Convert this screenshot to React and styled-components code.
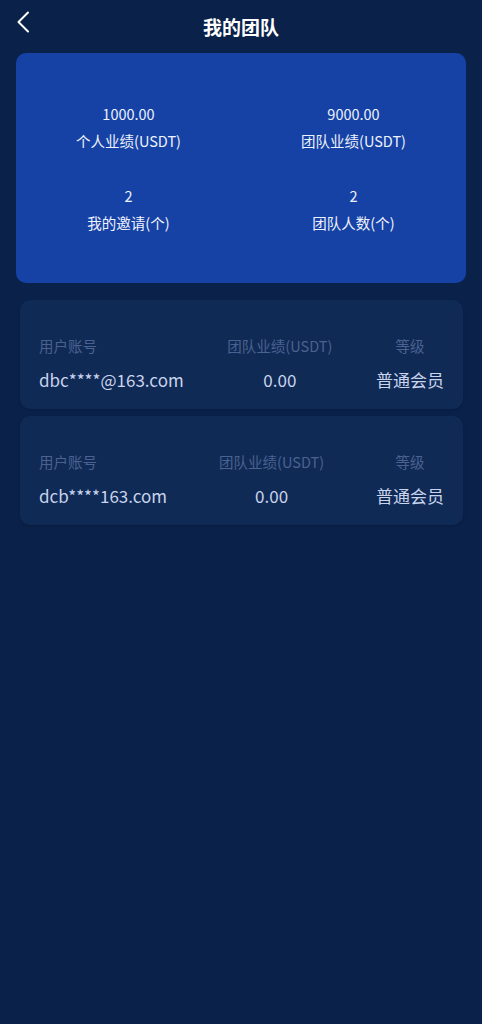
import styled, { createGlobalStyle } from 'styled-components'

const GlobalStyle = createGlobalStyle`
  html, body {
    margin: 0;
    padding: 0;
    background: #0a2149;
  }
  body {
    font-family: "Noto Sans CJK SC", "Noto Sans", sans-serif;
  }
`

const stats = [
  { value: '1000.00', label: '个人业绩(USDT)' },
  { value: '9000.00', label: '团队业绩(USDT)' },
  { value: '2', label: '我的邀请(个)' },
  { value: '2', label: '团队人数(个)' },
]

const members = [
  { account: 'dbc****@163.com', amount: '0.00', level: '普通会员' },
  { account: 'dcb****163.com', amount: '0.00', level: '普通会员' },
]

export default function App() {
  return (
    <Page>
      <GlobalStyle />
      <Header>
        <Back aria-label="返回">
          <svg width="14" height="22" viewBox="0 0 14 22" fill="none">
            <path d="M12 1.5L2.5 11L12 20.5" stroke="#ffffff" strokeWidth="2" strokeLinecap="round" strokeLinejoin="round" />
          </svg>
        </Back>
        <Title>我的团队</Title>
      </Header>

      <SummaryCard>
        {stats.map((s) => (
          <Stat key={s.label}>
            <div>{s.value}</div>
            <div>{s.label}</div>
          </Stat>
        ))}
      </SummaryCard>

      <List>
        {members.map((m) => (
          <MemberCard key={m.account}>
            <Col $align="flex-start">
              <ColLabel>用户账号</ColLabel>
              <ColValue>{m.account}</ColValue>
            </Col>
            <Col>
              <ColLabel>团队业绩(USDT)</ColLabel>
              <ColValue>{m.amount}</ColValue>
            </Col>
            <Col>
              <ColLabel>等级</ColLabel>
              <ColValue>{m.level}</ColValue>
            </Col>
          </MemberCard>
        ))}
      </List>
    </Page>
  )
}

const Page = styled.div`
  min-height: 1024px;
  background: #0a2149;
  padding: 0 16px;
  box-sizing: border-box;
`

const Header = styled.div`
  position: relative;
  height: 53px;
  display: flex;
  align-items: center;
  justify-content: center;
`

const Back = styled.div`
  position: absolute;
  left: 0;
  top: 11px;
  width: 14px;
  height: 22px;
  display: flex;
`

const Title = styled.h1`
  margin: 0;
  margin-top: -1px;
  font-size: 19px;
  font-weight: 700;
  color: #ffffff;
`

const SummaryCard = styled.div`
  background: #1642a6;
  border-radius: 10px;
  height: 230px;
  display: grid;
  grid-template-columns: 1fr 1fr;
  align-content: start;
  row-gap: 33px;
  padding-top: 50px;
  box-sizing: border-box;
`

const Stat = styled.div`
  display: flex;
  flex-direction: column;
  align-items: center;
  gap: 5px;
  color: #eef2fb;
  font-size: 14.5px;
  line-height: 22px;
`

const List = styled.div`
  display: flex;
  flex-direction: column;
  gap: 7px;
  margin: 17px 3px 0 4px;
`

const MemberCard = styled.div`
  background: #102a56;
  border-radius: 10px;
  height: 109px;
  padding: 35px 19px 0 19px;
  box-sizing: border-box;
  display: flex;
  justify-content: space-between;
  box-shadow: 0 1px 3px rgba(0, 0, 0, 0.15);
`

const Col = styled.div`
  display: flex;
  flex-direction: column;
  align-items: ${(p) => p.$align || 'center'};
  gap: 12px;
`

const ColLabel = styled.div`
  font-size: 14.5px;
  line-height: 22px;
  color: #4a6290;
`

const ColValue = styled.div`
  font-size: 17px;
  line-height: 22px;
  color: #c9d4ec;
`
